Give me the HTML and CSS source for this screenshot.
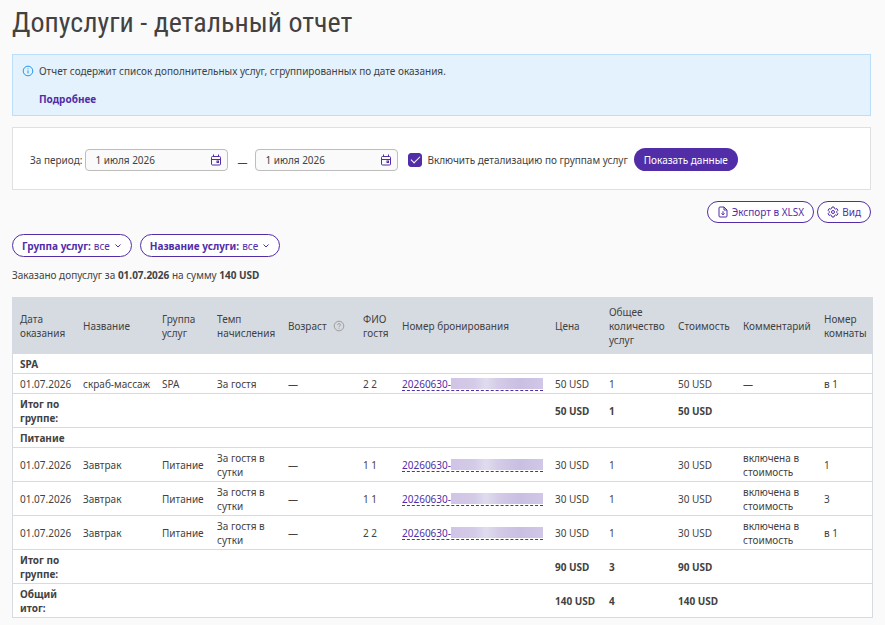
FILE: index.html
```html
<!DOCTYPE html>
<html lang="ru">

<head>
  <meta charset="UTF-8" />
  <meta name="viewport" content="width=device-width, initial-scale=1" />
  <title>Допуслуги - детальный отчет</title>
  <link rel="stylesheet" href="styles.css">
</head>

<body>

  <h1>Допуслуги - детальный отчет</h1>

  <div class="info">
    <svg class="info-icon" viewBox="0 0 12 12" fill="none" stroke="currentColor">
      <circle cx="6" cy="6" r="4.8" />
      <path d="M6 5.4v3M6 3.3v1" />
    </svg>
    <div>
      <p>Отчет содержит список дополнительных услуг, сгруппированных по дате оказания.</p>
      <a href="#" class="more">Подробнее</a>
    </div>
  </div>

  <!-- Фильтр по периоду -->
  <form class="period" onsubmit="return false;">
    <label for="dateFrom">За период:</label>
    <div class="date">
      <input type="text" id="dateFrom" value="1 июля 2026" />
      <button type="button" aria-label="Открыть календарь">
        <svg viewBox="0 0 12 12" fill="none" stroke="currentColor">
          <rect x="1.5" y="2.5" width="9" height="8.5" rx="1" />
          <path d="M1.5 5.5h9M3.5 0.5v2M8.5 0.5v2" />
          <rect x="7" y="7" width="1.5" height="1.5" />
        </svg>
      </button>
    </div>
    <span class="dash">—</span>
    <div class="date">
      <input type="text" id="dateTo" value="1 июля 2026" aria-label="Конец периода" />
      <button type="button" aria-label="Открыть календарь">
        <svg viewBox="0 0 12 12" fill="none" stroke="currentColor">
          <rect x="1.5" y="2.5" width="9" height="8.5" rx="1" />
          <path d="M1.5 5.5h9M3.5 0.5v2M8.5 0.5v2" />
          <rect x="7" y="7" width="1.5" height="1.5" />
        </svg>
      </button>
    </div>
    <input type="checkbox" id="details" class="check" checked />
    <label for="details" class="check-label">Включить детализацию по группам услуг</label>
    <button type="submit" class="btn-primary">Показать данные</button>
  </form>

  <div class="actions">
    <button type="button" class="btn">
      <svg viewBox="0 0 12 12" fill="none" stroke="currentColor">
        <path d="M7 1H3a1 1 0 0 0-1 1v8a1 1 0 0 0 1 1h6a1 1 0 0 0 1-1V4zM7 1v3h3M6 5.2v3.6M4.5 7.4L6 8.9l1.500-1.500" />
      </svg>
      Экспорт в XLSX
    </button>
    <button type="button" class="btn">
      <svg viewBox="0 0 12 12" fill="none" stroke="currentColor" stroke-linejoin="round">
        <path d="M5 1h2l.4 1.500 1 .6 1.500-.5 1 1.700-1.100 1.100v1.200l1.100 1.100-1 1.700-1.500-.5-1 .6L7 11H5l-.4-1.500-1-.6-1.500.5-1-1.700 1.100-1.100V5.400L1.100 4.300l1-1.700 1.500.5 1-.6z" />
        <circle cx="6" cy="6" r="1.500" />
      </svg>
      Вид
    </button>
  </div>

  <div class="filters">
    <button type="button" class="btn">
      <b>Группа услуг:</b> все
      <svg class="chevron" viewBox="0 0 8 8" fill="none" stroke="currentColor"><path d="M1.500 2.500L4 5l2.500-2.500" /></svg>
    </button>
    <button type="button" class="btn">
      <b>Название услуги:</b> все
      <svg class="chevron" viewBox="0 0 8 8" fill="none" stroke="currentColor"><path d="M1.500 2.500L4 5l2.500-2.500" /></svg>
    </button>
  </div>

  <p class="summary">Заказано допуслуг за <b>01.07.2026</b> на сумму <b>140 USD</b></p>

  <table class="report">
    <colgroup>
      <col class="c-date" />
      <col class="c-name" />
      <col class="c-group" />
      <col class="c-rate" />
      <col class="c-age" />
      <col class="c-guest" />
      <col class="c-booking" />
      <col class="c-price" />
      <col class="c-count" />
      <col class="c-cost" />
      <col class="c-comment" />
      <col class="c-room" />
    </colgroup>
    <thead>
      <tr>
        <th>Дата оказания</th>
        <th>Название</th>
        <th>Группа услуг</th>
        <th>Темп начисления</th>
        <th>
          <span class="age">Возраст
            <svg viewBox="0 0 12 12" fill="none" stroke="currentColor">
              <circle cx="6" cy="6" r="4.800" />
              <path d="M4.600 4.900c0-1.800 2.900-1.800 2.900 0 0 1-1.500 1-1.500 2M6 7.800v.9" />
            </svg>
          </span>
        </th>
        <th>ФИО гостя</th>
        <th>Номер бронирования</th>
        <th>Цена</th>
        <th>Общее количество услуг</th>
        <th>Стоимость</th>
        <th>Комментарий</th>
        <th>Номер комнаты</th>
      </tr>
    </thead>
    <tbody>
      <tr class="bold">
        <td colspan="12">SPA</td>
      </tr>
      <tr>
        <td>01.07.2026</td>
        <td>скраб-массаж</td>
        <td>SPA</td>
        <td>За гостя</td>
        <td>—</td>
        <td>2 2</td>
        <td><a href="#" class="booking">20260630-<span class="hidden-part"></span></a></td>
        <td>50 USD</td>
        <td>1</td>
        <td>50 USD</td>
        <td>—</td>
        <td>в 1</td>
      </tr>
      <tr class="bold">
        <td>Итог по группе:</td>
        <td colspan="6"></td>
        <td>50 USD</td>
        <td>1</td>
        <td>50 USD</td>
        <td colspan="2"></td>
      </tr>
      <tr class="bold">
        <td colspan="12">Питание</td>
      </tr>
      <tr>
        <td>01.07.2026</td>
        <td>Завтрак</td>
        <td>Питание</td>
        <td>За гостя в сутки</td>
        <td>—</td>
        <td>1 1</td>
        <td><a href="#" class="booking">20260630-<span class="hidden-part"></span></a></td>
        <td>30 USD</td>
        <td>1</td>
        <td>30 USD</td>
        <td>включена в стоимость</td>
        <td>1</td>
      </tr>
      <tr>
        <td>01.07.2026</td>
        <td>Завтрак</td>
        <td>Питание</td>
        <td>За гостя в сутки</td>
        <td>—</td>
        <td>1 1</td>
        <td><a href="#" class="booking">20260630-<span class="hidden-part"></span></a></td>
        <td>30 USD</td>
        <td>1</td>
        <td>30 USD</td>
        <td>включена в стоимость</td>
        <td>3</td>
      </tr>
      <tr>
        <td>01.07.2026</td>
        <td>Завтрак</td>
        <td>Питание</td>
        <td>За гостя в сутки</td>
        <td>—</td>
        <td>2 2</td>
        <td><a href="#" class="booking">20260630-<span class="hidden-part"></span></a></td>
        <td>30 USD</td>
        <td>1</td>
        <td>30 USD</td>
        <td>включена в стоимость</td>
        <td>в 1</td>
      </tr>
      <tr class="bold">
        <td>Итог по группе:</td>
        <td colspan="6"></td>
        <td>90 USD</td>
        <td>3</td>
        <td>90 USD</td>
        <td colspan="2"></td>
      </tr>
      <tr class="bold">
        <td>Общий итог:</td>
        <td colspan="6"></td>
        <td>140 USD</td>
        <td>4</td>
        <td>140 USD</td>
        <td colspan="2"></td>
      </tr>
    </tbody>
  </table>

</body>

</html>
```
FILE: styles.css
```css
* {
  margin: 0;
  padding: 0;
  box-sizing: border-box;
}

body {
  font-family: "Noto Sans", sans-serif;
  font-size: 10px;
  line-height: 14px;
  background-color: #fafafa;
  color: #424242;
  padding: 6px 12px;
}

button,
input {
  font: inherit;
  color: inherit;
}

button {
  cursor: pointer;
}

svg {
  width: 12px;
  height: 12px;
  flex-shrink: 0;
}

h1 {
  font-family: "Roboto Condensed", Roboto, sans-serif;
  font-size: 28px;
  font-weight: 400;
  line-height: 34px;
  margin-bottom: 14px;
}

.info {
  display: flex;
  gap: 5px;
  margin-right: 2px;
  padding: 9px;
  background-color: #e3f2fd;
  border: 1px solid #bbdefb;
}

.info-icon {
  color: #2196f3;
  margin-top: 1px;
}

.info p {
  margin-bottom: 14px;
}

.more {
  display: block;
  color: #512da8;
  font-weight: 700;
  text-decoration: none;
}

.period {
  display: flex;
  align-items: center;
  margin: 11px 2px 11px 0;
  padding: 20px 17px 18px;
  background-color: #fff;
  border: 1px solid #e0e0e0;
}

.date {
  display: flex;
  align-items: center;
  width: 143px;
  height: 22px;
  margin-left: 3px;
  padding: 0 5px 0 9px;
  background-color: #fafafa;
  border: 1px solid #bdbdbd;
  border-radius: 4px;
}

.date input {
  flex: 1;
  min-width: 0;
  border: none;
  background: none;
  outline: none;
}

.date button {
  display: flex;
  border: none;
  background: none;
  color: #512da8;
}

.dash {
  margin: 4px 5px 0 9px;
}

.check {
  display: flex;
  align-items: center;
  justify-content: center;
  width: 14px;
  height: 14px;
  margin: 0 5px 0 10px;
  appearance: none;
  border: 1px solid #512da8;
  border-radius: 3px;
}

.check:checked {
  background-color: #512da8;
}

/* галочка */
.check:checked::after {
  content: "";
  width: 8px;
  height: 4px;
  margin-bottom: 2px;
  border: solid #fff;
  border-width: 0 0 1px 1px;
  transform: rotate(-45deg);
}

.btn-primary {
  height: 23px;
  margin-left: 6px;
  padding: 0 10px;
  border: none;
  border-radius: 12px;
  background-color: #512da8;
  color: #fff;
}

.btn {
  display: flex;
  align-items: center;
  gap: 3px;
  height: 22px;
  padding: 0 9px;
  border: 1px solid #512da8;
  border-radius: 12px;
  background-color: #fff;
  color: #512da8;
}

.actions {
  display: flex;
  justify-content: flex-end;
  gap: 3px;
  margin: 0 2px 11px 0;
}

.filters {
  display: flex;
  gap: 8px;
  margin-bottom: 11px;
}

.filters .btn {
  height: 23px;
}

.chevron {
  width: 8px;
  height: 8px;
  margin-left: 1px;
}

.summary {
  margin-bottom: 15px;
}

.report {
  width: 100%;
  table-layout: fixed;
  border-collapse: separate;
  border-spacing: 0;
  background-color: #fff;
  border: 1px solid #d6dbe2;
  border-bottom: none;
}

.c-date { width: 63px; }
.c-name { width: 79px; }
.c-group { width: 55px; }
.c-rate { width: 71px; }
.c-age { width: 75px; }
.c-guest { width: 39px; }
.c-booking { width: 153px; }
.c-price { width: 54px; }
.c-count { width: 69px; }
.c-cost { width: 65px; }
.c-comment { width: 81px; }
.c-room { width: 55px; }

th,
td {
  text-align: left;
  vertical-align: middle;
  white-space: normal;
}

th {
  height: 56px;
  padding: 0 0 0 7px;
  background-color: #d6dbe2;
  font-weight: 400;
}

td {
  padding: 3px 0 2px 7px;
  border-bottom: 1px solid #d6dbe2;
}

.bold td {
  font-weight: 700;
}

.age {
  display: flex;
  align-items: center;
  gap: 6px;
}

.age svg {
  color: #9e9e9e;
}

.booking {
  display: flex;
  align-items: center;
  width: 141px;
  height: 14px;
  border-bottom: 1px dashed #512da8;
  color: #512da8;
  text-decoration: none;
}

.hidden-part {
  flex: 1;
  height: 11px;
  background: linear-gradient(90deg, #d1c4e6, #d3cbe7 25%, #e0dcee 38%, #d3cbe7 52%, #c9bfe2 75%, #d1c8e8);
}
```
